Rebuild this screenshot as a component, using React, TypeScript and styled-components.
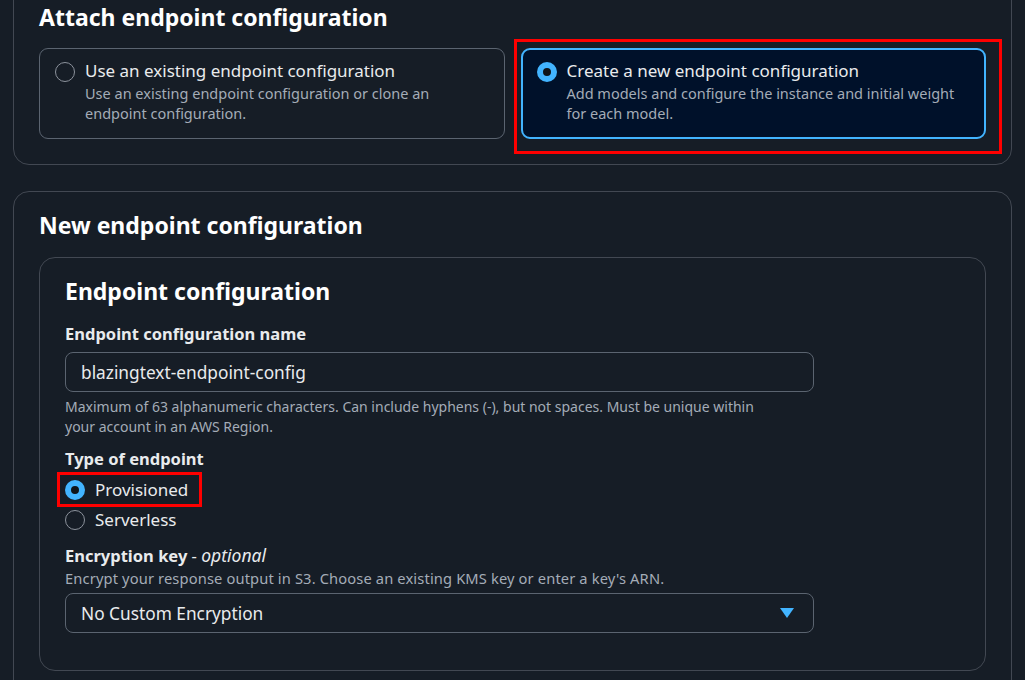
import React from "react";
import styled, { createGlobalStyle } from "styled-components";

const Global = createGlobalStyle`
  html, body { margin: 0; padding: 0; background: #161d26; }
  body { font-family: "Noto Sans", "Open Sans", Arial, sans-serif; color: #e9ebed; overflow: hidden; }
  * { box-sizing: border-box; }
`;

const Page = styled.div`
  width: 1025px;
  height: 680px;
  padding: 0 13px;
  display: flex;
  flex-direction: column;
  gap: 26px;
  overflow: hidden;
`;

const Card = styled.section<{ $top?: boolean }>`
  border: 1px solid #424852;
  border-radius: 16px;
  padding: ${(p) => (p.$top ? "22px 25px 25px" : "19px 25px 25px")};
  margin-top: ${(p) => (p.$top ? "-20px" : "0")};
  display: flex;
  flex-direction: column;
  flex-shrink: 0;
`;

const H2 = styled.h2`
  margin: 0;
  font-size: 23px;
  line-height: 28px;
  font-weight: 700;
  color: #ffffff;
`;

const TileGrid = styled.div`
  margin-top: 17px;
  display: grid;
  grid-template-columns: 1fr 1fr;
  gap: 16px;
`;

const TileWrap = styled.div`
  position: relative;
`;

const Tile = styled.div<{ $selected?: boolean }>`
  height: 91px;
  border-radius: 9px;
  border: ${(p) => (p.$selected ? "2px solid #42b4ff" : "1px solid #5b6470")};
  background: ${(p) => (p.$selected ? "#00112a" : "transparent")};
  padding: ${(p) => (p.$selected ? "10px 14px" : "11px 15px")};
  display: flex;
  gap: 10px;
  align-items: flex-start;
`;

const RadioDot = styled.span<{ $checked?: boolean }>`
  flex-shrink: 0;
  width: 20px;
  height: 20px;
  border-radius: 50%;
  margin-top: 2px;
  border: ${(p) => (p.$checked ? "6px solid #42b4ff" : "1.5px solid #8c929c")};
  background: ${(p) => (p.$checked ? "#0f141a" : "transparent")};
`;

const TileText = styled.div`
  display: flex;
  flex-direction: column;
`;

const TileTitle = styled.div`
  font-size: 17px;
  line-height: 22px;
  color: #e9ebed;
`;

const Desc = styled.div<{ $size?: number; $mt?: number; $ls?: number }>`
  margin-top: ${(p) => p.$mt ?? 0}px;
  font-size: ${(p) => p.$size ?? 14.5}px;
  letter-spacing: ${(p) => p.$ls ?? 0}px;
  line-height: 20px;
  color: #a4acb7;
`;

const Highlight = styled.div<{ $t: number; $r: number; $b: number; $l: number }>`
  position: absolute;
  top: ${(p) => -p.$t}px;
  right: ${(p) => -p.$r}px;
  bottom: ${(p) => -p.$b}px;
  left: ${(p) => -p.$l}px;
  border: 3px solid #ff0000;
  pointer-events: none;
`;

const InnerCard = styled.div`
  margin-top: 18px;
  border: 1px solid #424852;
  border-radius: 16px;
  padding: 19px 25px 37px;
  display: flex;
  flex-direction: column;
`;

const Field = styled.div<{ $mt?: number }>`
  margin-top: ${(p) => p.$mt ?? 0}px;
  display: flex;
  flex-direction: column;
`;

const Label = styled.div`
  font-size: 16.5px;
  line-height: 22px;
  font-weight: 700;
  color: #e9ebed;
  span { font-weight: 400; }
  em { font-weight: 400; font-style: italic; font-size: 17.5px; }
`;

const Input = styled.div<{ $mt?: number }>`
  margin-top: ${(p) => p.$mt ?? 7}px;
  width: 749px;
  height: 40px;
  border: 1px solid #5b6470;
  border-radius: 8px;
  padding: 0 15px;
  display: flex;
  align-items: center;
  justify-content: space-between;
  font-size: 17.3px;
  color: #e9ebed;
`;

const Caret = styled.svg`
  width: 14px;
  height: 10px;
  margin-right: 4px;
`;

const RadioList = styled.div`
  margin-top: 10px;
  display: flex;
  flex-direction: column;
  gap: 10px;
`;

const RadioRow = styled.div`
  position: relative;
  display: flex;
  align-items: center;
  gap: 10px;
  width: fit-content;
  font-size: 17px;
  line-height: 20px;
  color: #e9ebed;
`;

const RowRadio = styled(RadioDot)`
  margin-top: 0;
`;

export default function App() {
  return (
    <>
      <Global />
      <Page>
        <Card $top>
          <H2>Attach endpoint configuration</H2>
          <TileGrid>
            <TileWrap>
              <Tile>
                <RadioDot />
                <TileText>
                  <TileTitle>Use an existing endpoint configuration</TileTitle>
                  <Desc $mt={1}>
                    Use an existing endpoint configuration or clone an
                    <br />
                    endpoint configuration.
                  </Desc>
                </TileText>
              </Tile>
            </TileWrap>
            <TileWrap>
              <Tile $selected>
                <RadioDot $checked />
                <TileText>
                  <TileTitle>Create a new endpoint configuration</TileTitle>
                  <Desc $mt={1}>
                    Add models and configure the instance and initial weight
                    <br />
                    for each model.
                  </Desc>
                </TileText>
              </Tile>
              <Highlight $t={9} $r={16} $b={15} $l={7} />
            </TileWrap>
          </TileGrid>
        </Card>

        <Card>
          <H2>New endpoint configuration</H2>
          <InnerCard>
            <H2>Endpoint configuration</H2>
            <Field $mt={18}>
              <Label>Endpoint configuration name</Label>
              <Input>blazingtext-endpoint-config</Input>
              <Desc $size={14} $mt={5}>
                Maximum of 63 alphanumeric characters. Can include hyphens (-), but not spaces. Must be unique within
                <br />
                your account in an AWS Region.
              </Desc>
            </Field>
            <Field $mt={11}>
              <Label>Type of endpoint</Label>
              <RadioList>
                <RadioRow>
                  <RowRadio $checked />
                  Provisioned
                  <Highlight $t={8} $r={14} $b={7} $l={8} />
                </RadioRow>
                <RadioRow>
                  <RowRadio />
                  Serverless
                </RadioRow>
              </RadioList>
            </Field>
            <Field $mt={14}>
              <Label>
                Encryption key <span>-</span> <em>optional</em>
              </Label>
              <Desc $size={14.7} $ls={0.13} $mt={1}>
                Encrypt your response output in S3. Choose an existing KMS key or enter a key's ARN.
              </Desc>
              <Input $mt={5}>
                No Custom Encryption
                <Caret viewBox="0 0 14 10">
                  <path d="M0 0 H14 L7 10 Z" fill="#42b4ff" />
                </Caret>
              </Input>
            </Field>
          </InnerCard>
        </Card>
      </Page>
    </>
  );
}
